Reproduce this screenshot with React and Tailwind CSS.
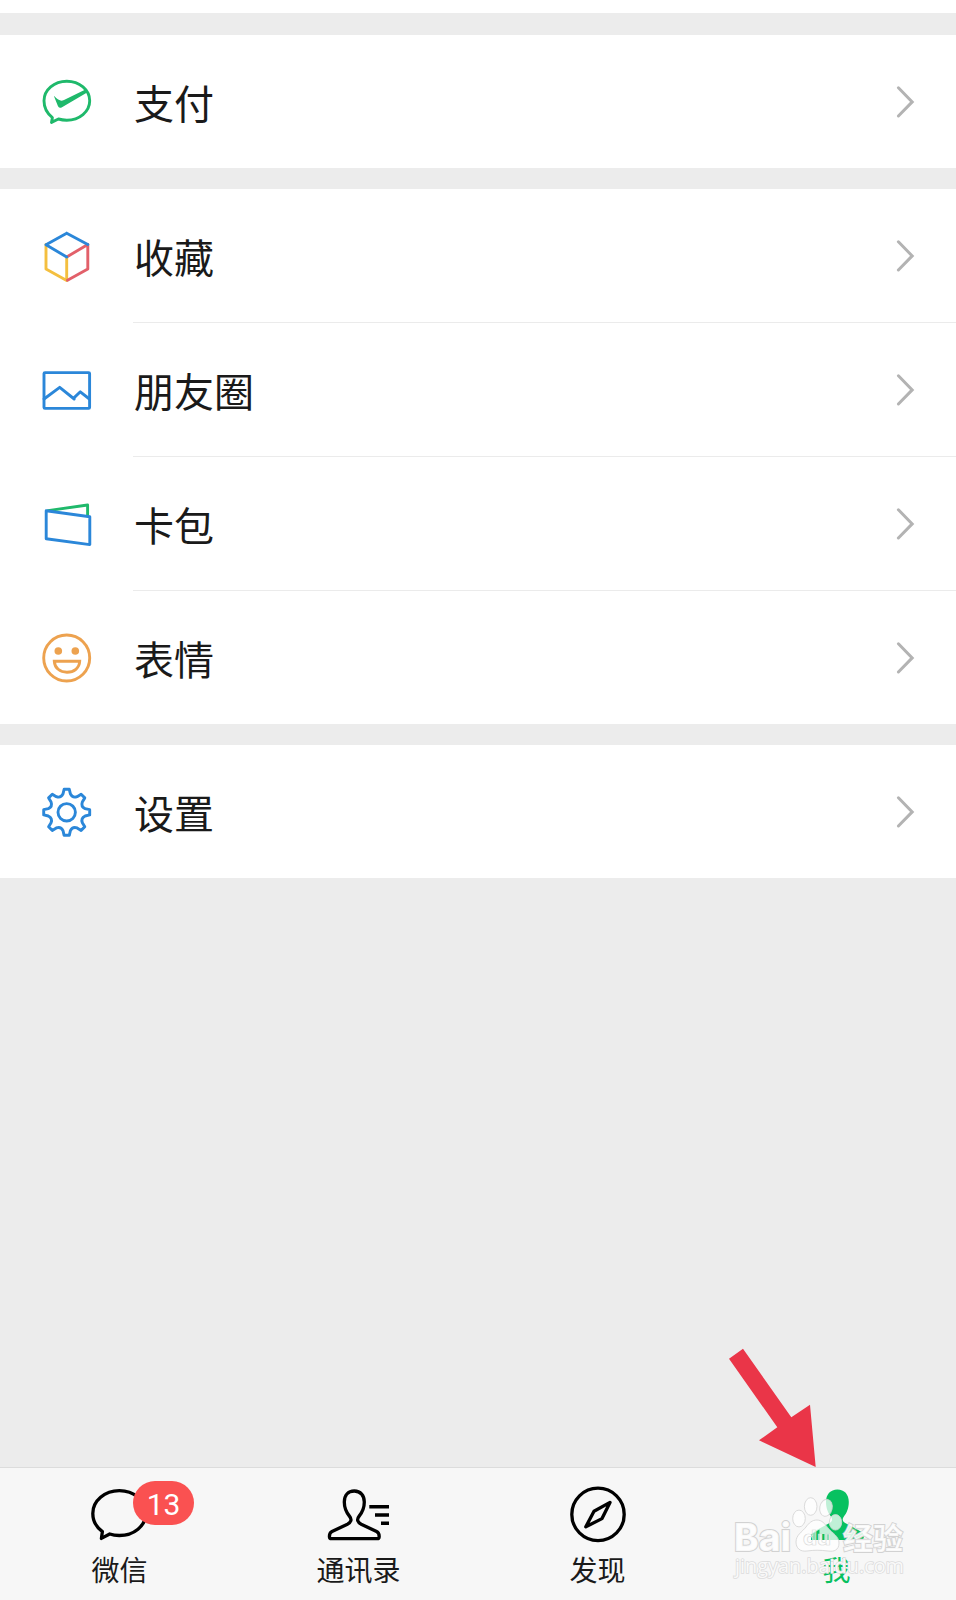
import React from 'react';

const BLUE = '#2b87d9';
const GREEN = '#1fb96b';

const chatPath = 'M12.4 42.6 C7.2 38.6 4 32.5 4 25.8 C4 14.9 14.2 6.2 26.8 6.2 S49.7 14.9 49.7 25.8 S39.4 45.2 26.8 45.2 C23.8 45.2 21 44.8 18.4 44 L11.5 47.4 Z';

// eight-tooth outline around (26.7, 27.3)
function gearPath() {
  const pts = [];
  const at = (x, y, deg) => {
    const a = (deg * Math.PI) / 180;
    const px = 26.7 + x * Math.cos(a) - y * Math.sin(a);
    const py = 27.3 + x * Math.sin(a) + y * Math.cos(a);
    return `${px.toFixed(2)} ${py.toFixed(2)}`;
  };
  for (let i = 0; i < 8; i++) {
    const deg = i * 45;
    pts.push(`${i === 0 ? 'M' : 'L'}${at(-2.6, -23, deg)} L${at(2.6, -23, deg)} L${at(3.7, -18.4, deg)} Q${at(5.8, -14, deg)} ${at(-3.7, -18.4, deg + 45)}`);
  }
  return pts.join(' ') + ' Z';
}

function RowIcon({ children }) {
  return (
    <svg className="w-[54px] h-[53px] ml-10 shrink-0 overflow-visible" viewBox="0 0 54 53" fill="none" strokeWidth="2.9" strokeLinejoin="round" strokeLinecap="round">
      {children}
    </svg>
  );
}

const PayIcon = () => (
  <RowIcon>
    <path d={chatPath} stroke={GREEN} />
    <path d="M13.8 20.8 C16 23 18 25 20.6 25.6 Q22 25.9 24 25 L46 14.2 L48.4 16.8 L21.6 32.4 Q19.4 33.6 18 31.2 Z" fill={GREEN} />
  </RowIcon>
);

const FavoritesIcon = () => (
  <RowIcon>
    <path d="M6 15.5 V40 L26.7 51.6 V28" stroke="#f4bf3f" />
    <path d="M27.5 51.2 L47.8 40 V15.5 L27.5 27.5" stroke="#e2606a" />
    <path d="M26.7 4.2 L47.8 15.5 M26.7 4.2 L6 15.7 L26.7 28" stroke={BLUE} />
  </RowIcon>
);

const MomentsIcon = () => (
  <RowIcon>
    <rect x="4" y="9.6" width="45.6" height="35.8" rx="1" stroke={BLUE} />
    <path d="M4 36 L19.7 24.3 L34.2 36 M34.2 34.6 L40.3 28.8 L49.4 36" stroke={BLUE} />
  </RowIcon>
);

const CardsIcon = () => (
  <RowIcon>
    <path d="M8 13.6 L47.6 8 V18.6" stroke={GREEN} />
    <path d="M6.2 13.8 L49.8 19.7 V47.6 L6.2 41.8 Z" stroke={BLUE} />
  </RowIcon>
);

const StickersIcon = () => (
  <RowIcon>
    <g stroke="#eda24f">
      <circle cx="26.7" cy="27" r="23" />
      <path d="M14.3 30.3 H39.7 C39.4 37 34 41.2 27 41.2 S14.7 37 14.3 30.3 Z" strokeLinejoin="miter" />
    </g>
    <circle cx="18.3" cy="20" r="3.8" fill="#eda24f" />
    <circle cx="35.3" cy="20" r="3.8" fill="#eda24f" />
  </RowIcon>
);

const SettingsIcon = () => (
  <RowIcon>
    <path d={gearPath()} stroke={BLUE} />
    <circle cx="26.7" cy="27.3" r="8.7" stroke={BLUE} />
  </RowIcon>
);

function Row({ icon, label, divider }) {
  return (
    <div>
      <button className="flex w-full h-[133px] items-center bg-white text-left">
        {icon}
        <span className="ml-10 flex-1 pt-px text-[40px] leading-none text-[#1a1a1a]">{label}</span>
        <svg className="w-8 h-[53px] mr-[34px]" viewBox="0 0 32 53" fill="none" stroke="#b3b3b3" strokeWidth="3" strokeLinecap="round">
          <path d="M8.4 12.8 L22.2 26.9 L8.4 41" />
        </svg>
      </button>
      {divider && <div className="h-px bg-white pl-[133px]"><div className="h-px bg-[#ebebeb]" /></div>}
    </div>
  );
}

function TabIcon({ children }) {
  return (
    <svg className="w-[79px] h-[66px] overflow-visible" viewBox="0 0 79 66" fill="none" stroke="#000" strokeWidth="3.3" strokeLinejoin="round">
      {children}
    </svg>
  );
}

function Tab({ icon, label, badge, active }) {
  return (
    <button className="flex flex-1 flex-col items-center pt-3">
      <span className="relative">
        {icon}
        {badge && (
          <span className="absolute left-[53px] top-px flex h-11 w-[61px] items-center justify-center rounded-full bg-[#fa5151] pt-[3px] font-[Roboto] text-[30px] leading-none text-white">
            {badge}
          </span>
        )}
      </span>
      <span className={`mt-[9px] text-[28px] leading-[28px] ${active ? 'text-[#07c160]' : 'text-[#1a1a1a]'}`}>{label}</span>
    </button>
  );
}

function Watermark() {
  return (
    <svg className="absolute left-[710px] top-[1460px] w-[246px] h-[140px] pointer-events-none" viewBox="0 0 246 140">
      <g fill="#fff" fillOpacity="0.75" stroke="#d2d2d2" strokeOpacity="0.8" strokeWidth="1">
        <ellipse cx="89" cy="58.5" rx="6.3" ry="8.4" />
        <ellipse cx="100.7" cy="46.5" rx="6.3" ry="8.8" />
        <ellipse cx="116" cy="47.8" rx="6.2" ry="8.6" transform="rotate(12 116 47.8)" />
        <ellipse cx="125.5" cy="62.3" rx="6.2" ry="7.8" />
        <path d="M107 60 C112 60 115 64 118 68 C122 73 129 76 129 83 C129 90 124 92 118 91 C110 90 104 90 97 91 C90 92 86 88 86 82 C86 75 92 72 96 67 C99 63 102 60 107 60 Z" />
      </g>
      {/* shoulder colour showing through the paw */}
      <g fill="#07c160">
        <path d="M101 74.5 L109.5 69.5 V80 H101 Z" />
        <rect x="112" y="74" width="2.4" height="6" />
        <rect x="116.6" y="74" width="2.4" height="6" />
      </g>
      <g fill="#fff" fillOpacity="0.85" stroke="#d2d2d2" strokeWidth="0.9" paintOrder="stroke">
        <text x="93" y="85" fontSize="20" fontWeight="700" fillOpacity="0.5" strokeWidth="0.7" fontFamily="Inter, sans-serif" textLength="28" lengthAdjust="spacingAndGlyphs">du</text>
        <text x="24" y="91" fontSize="38" fontWeight="800" strokeWidth="2" fontFamily="Inter, sans-serif" textLength="57" lengthAdjust="spacingAndGlyphs">Bai</text>
        <text x="133" y="88.5" fontSize="30" fontWeight="700" strokeWidth="1.8" fontFamily="'Noto Sans CJK SC', sans-serif" textLength="60">经验</text>
        <text x="25" y="113" fontSize="20" strokeWidth="1.6" stroke="#dcdcdc" fontFamily="'Open Sans', sans-serif" textLength="169" lengthAdjust="spacingAndGlyphs">jingyan.baidu.com</text>
      </g>
    </svg>
  );
}

function App() {
  return (
    <div className="relative flex h-[1600px] w-[956px] flex-col overflow-hidden bg-[#ececec] font-['Noto_Sans_CJK_SC',sans-serif]">
      <div className="h-[13px] bg-white" />

      <main className="mt-[22px] flex flex-1 flex-col gap-[21px]">
        <section>
          <Row icon={<PayIcon />} label="支付" />
        </section>
        <section>
          <Row icon={<FavoritesIcon />} label="收藏" divider />
          <Row icon={<MomentsIcon />} label="朋友圈" divider />
          <Row icon={<CardsIcon />} label="卡包" divider />
          <Row icon={<StickersIcon />} label="表情" />
        </section>
        <section>
          <Row icon={<SettingsIcon />} label="设置" />
        </section>
      </main>

      <nav className="flex h-[133px] border-t border-[#dcdcdc] bg-[#f7f7f7]">
        <Tab
          label="微信"
          badge="13"
          icon={
            <TabIcon>
              <path d="M22.4 51.6 C16.4 47.2 12.8 40.8 12.8 33.4 C12.8 20.8 24.8 10.7 39.3 10.7 S65.8 20.8 65.8 33.4 S53.8 55.5 39.3 55.5 C35.8 55.5 32.6 55 29.7 54 L21.4 58.4 Z" />
            </TabIcon>
          }
        />
        <Tab
          label="通讯录"
          icon={
            <TabIcon>
              <path d="M35.3 11 C29 11 25.3 15.5 25.3 22 C25.3 28.5 27 32 30.6 36.4 C33.2 39.6 32 42.3 28.4 44.2 L13 51.6 C10.6 52.8 10.4 54 10.4 56.4 Q10.4 58.7 12.6 58.7 H58 Q60.2 58.7 60.2 56.4 C60.2 54 60 52.8 57.6 51.6 L42.2 44.2 C38.6 42.3 37.4 39.6 40 36.4 C43.6 32 45.3 28.5 45.3 22 C45.3 15.5 41.6 11 35.3 11 Z" />
              <path d="M50.3 26.7 H70 M56 35 H70 M62 43.3 H70" strokeWidth="3.4" />
            </TabIcon>
          }
        />
        <Tab
          label="发现"
          icon={
            <TabIcon>
              <circle cx="40" cy="34.4" r="26.2" />
              <path d="M52 22.4 L36 31.2 L27.8 46.8 L44 38.6 Z" />
            </TabIcon>
          }
        />
        <Tab
          label="我"
          active
          icon={
            <TabIcon>
              <path d="M40.4 9.5 C33.5 9.5 29 14.4 29 21.8 C29 28.4 31 33 34.4 37.2 C35.8 39.6 35 41.6 32.6 43 L17 51.4 C14.4 52.8 14 54.6 14 57.6 Q14 60 16.4 60 H64.4 Q66.8 60 66.8 57.6 C66.8 54.6 66.4 52.8 63.8 51.4 L48.2 43 C45.8 41.6 45 39.6 46.4 37.2 C49.8 33 51.8 28.4 51.8 21.8 C51.8 14.4 47.3 9.5 40.4 9.5 Z" fill="#07c160" stroke="none" />
            </TabIcon>
          }
        />
      </nav>

      <svg className="absolute left-[720px] top-[1345px] w-[100px] h-[124px]" viewBox="0 0 100 124">
        <polygon points="9,13.7 23,3.7 71.3,72.3 90,59.7 95.7,122 39,95.3 57.3,82.3" fill="#ea3548" />
      </svg>
      <Watermark />
    </div>
  );
}

export default App;
